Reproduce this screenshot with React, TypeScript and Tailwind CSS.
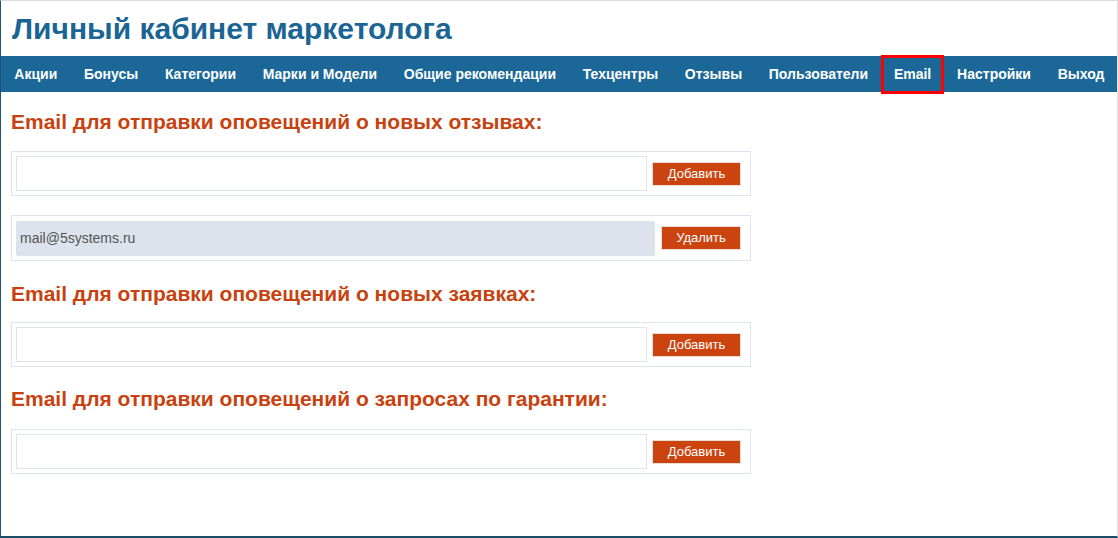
const NAV = [
  'Акции',
  'Бонусы',
  'Категории',
  'Марки и Модели',
  'Общие рекомендации',
  'Техцентры',
  'Отзывы',
  'Пользователи',
  'Email',
  'Настройки',
  'Выход',
];

function AddRow() {
  return (
    <div className="w-[740px] h-[45px] border border-[#dde4ec] flex items-center pl-[4px] pr-[9px] gap-[5px]">
      <input className="flex-1 h-[35px] border border-[#dde4ec] bg-white outline-none" />
      <button className="w-[89px] h-[24px] bg-[#cb4410] border border-[#e6ddd6] text-white text-[13px]">Добавить</button>
    </div>
  );
}

function EmailRow({ email }: { email: string }) {
  return (
    <div className="w-[740px] h-[46px] border border-[#dde4ec] flex items-center pl-[4px] pr-[9px] gap-[6px]">
      <div className="flex-1 h-[35px] bg-[#dce3ec] rounded-[2px] flex items-center pl-[4px] text-[14px] text-[#555]">{email}</div>
      <button className="w-[80px] h-[24px] bg-[#cb4410] border border-[#e6ddd6] text-white text-[13px]">Удалить</button>
    </div>
  );
}

function Heading({ children, className }: { children: string; className: string }) {
  return <h2 className={`text-[21px] leading-[24px] font-bold text-[#c8420f] whitespace-nowrap ${className}`}>{children}</h2>;
}

export default function App() {
  return (
    <div className="h-[538px] w-[1118px] border-l border-l-[#1a5573] border-b-2 border-b-[#1a4d66] border-r border-r-[#e2e2e2] border-t border-t-[#dcdcdc] bg-white font-['Liberation_Sans',Arial,sans-serif] overflow-hidden">
      <div className="h-[55px] pl-[11px] pt-[10px]">
        <h1 className="text-[30px] leading-[36px] font-bold text-[#1b6595] whitespace-nowrap">Личный кабинет маркетолога</h1>
      </div>
      <nav className="h-[36px] bg-[#1b6898] flex items-center whitespace-nowrap">
        {NAV.map(item => (
          <div
            key={item}
            className={
              item === 'Email'
                ? 'h-[39px] px-[9.5px] flex items-center border-[3px] border-[#ff0000] text-white text-[14px] font-bold'
                : 'px-[13.35px] text-white text-[14px] font-bold'
            }
          >
            {item}
          </div>
        ))}
      </nav>
      <div className="pl-[10px]">
        <Heading className="mt-[18px] mb-[17px]">Email для отправки оповещений о новых отзывах:</Heading>
        <AddRow />
        <div className="mt-[19px]">
          <EmailRow email="mail@5systems.ru" />
        </div>
        <Heading className="mt-[21px] mb-[16px]">Email для отправки оповещений о новых заявках:</Heading>
        <AddRow />
        <Heading className="mt-[20px] mb-[18px]">Email для отправки оповещений о запросах по гарантии:</Heading>
        <AddRow />
      </div>
    </div>
  );
}
